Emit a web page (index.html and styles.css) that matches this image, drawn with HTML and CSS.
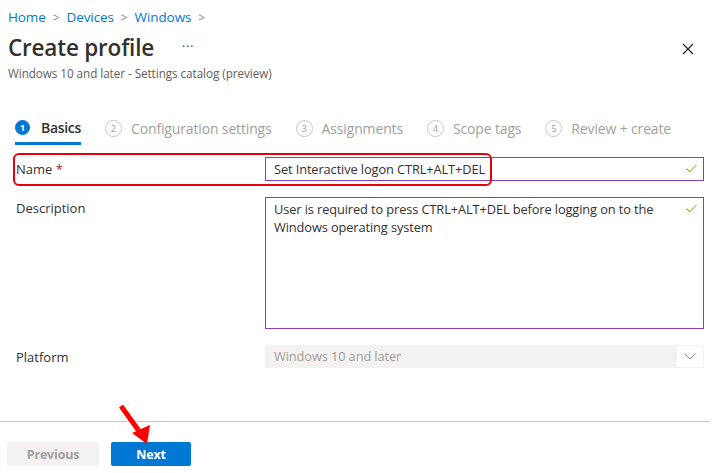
FILE: index.html
```html
<!DOCTYPE html>
<html>
<head>
<meta charset="utf-8">
<link rel="stylesheet" href="styles.css">
</head>
<body>
<div class="page">
  <nav class="crumbs">
    <a>Home</a><span class="sep">&gt;</span><a>Devices</a><span class="sep">&gt;</span><a>Windows</a><span class="sep">&gt;</span>
  </nav>
  <div class="title-row">
    <h1>Create profile</h1>
    <span class="more">···</span>
    <span class="spacer"></span>
    <svg class="close" width="12" height="12" viewBox="0 0 12 12"><path d="M1 1L11 11M11 1L1 11" stroke="#222" stroke-width="1.2" fill="none"/></svg>
  </div>
  <div class="subtitle">Windows 10 and later - Settings catalog (preview)</div>

  <div class="tabs">
    <div class="tab active"><span class="num">1</span><span class="lbl">Basics</span></div>
    <div class="tab"><span class="num">2</span><span class="lbl">Configuration settings</span></div>
    <div class="tab"><span class="num">3</span><span class="lbl">Assignments</span></div>
    <div class="tab"><span class="num">4</span><span class="lbl">Scope tags</span></div>
    <div class="tab"><span class="num">5</span><span class="lbl">Review + create</span></div>
  </div>

  <div class="form">
    <div class="row row-name">
      <div class="label">Name <span class="req">*</span></div>
      <div class="field input">
        <span class="val">Set Interactive logon CTRL+ALT+DEL</span>
        <svg class="check" width="11" height="9" viewBox="0 0 11 9"><path d="M0.5 4.5L3.8 7.8L10.5 1" stroke="#57a300" stroke-width="1" fill="none"/></svg>
      </div>
      <div class="highlight"></div>
    </div>
    <div class="row row-desc">
      <div class="label">Description</div>
      <div class="field textarea">
        <span class="val">User is required to press CTRL+ALT+DEL before logging on to the Windows operating system</span>
        <svg class="check" width="11" height="9" viewBox="0 0 11 9"><path d="M0.5 4.5L3.8 7.8L10.5 1" stroke="#57a300" stroke-width="1" fill="none"/></svg>
      </div>
    </div>
    <div class="row row-plat">
      <div class="label">Platform</div>
      <div class="field select">
        <span class="val">Windows 10 and later</span>
        <span class="chev"><svg width="12" height="7" viewBox="0 0 12 7"><path d="M0.5 0.5L6 6L11.5 0.5" stroke="#8a8886" stroke-width="1" fill="none"/></svg></span>
      </div>
    </div>
  </div>

  <div class="divider"></div>

  <div class="footer">
    <button class="btn prev">Previous</button>
    <button class="btn next">Next</button>
    <svg class="arrow" width="40" height="45" viewBox="0 0 40 45"><path d="M2 2L20 27" stroke="#f00" stroke-width="5" fill="none"/><polygon points="13,29 31,21 28,40" fill="#f00"/></svg>
  </div>
</div>
</body>
</html>
```
FILE: styles.css
```css
* { box-sizing: border-box; }
html, body { margin: 0; padding: 0; background: #fff; }
body {
  font-family: "Open Sans", "Noto Sans", sans-serif;
  font-size: 13px;
  color: #323130;
  width: 715px;
  height: 473px;
  overflow: hidden;
}
.page { position: relative; }

.crumbs {
  padding: 7px 0 0 8px;
  height: 27px;
  line-height: 20px;
  font-size: 13.5px;
  letter-spacing: -0.1px;
}
.crumbs a { color: #0078d4; }
.crumbs .sep { color: #8a8886; margin: 0 7px; font-size: 12px; }

.title-row {
  display: flex;
  align-items: center;
  margin-top: 6px;
  padding: 0 21px 0 8px;
  height: 30px;
}
h1 {
  margin: 0;
  font-size: 22.5px;
  font-weight: 600;
  line-height: 30px;
  color: #323130;
  letter-spacing: -0.2px;
}
.more { margin-left: 28px; font-size: 12px; color: #323130; letter-spacing: 1px; position: relative; top: -2px; }
.spacer { flex: 1; }
.close { display: block; margin-top: 2px; }

.subtitle {
  margin-top: 2px;
  padding-left: 8px;
  height: 16px;
  line-height: 16px;
  font-size: 11.7px;
  color: #605e5c;
  letter-spacing: -0.05px;
}

.tabs {
  display: flex;
  margin-top: 32px;
  padding-left: 15px;
  gap: 24px;
  height: 32px;
}
.tab {
  display: flex;
  align-items: center;
  height: 32px;
  padding-bottom: 2px;
  color: #a19f9d;
  font-size: 14px;
  letter-spacing: -0.15px;
}
.tab .num {
  width: 17px;
  height: 17px;
  border: 1px solid #c8c6c4;
  border-radius: 50%;
  display: flex;
  align-items: center;
  justify-content: center;
  font-size: 9.5px;
  color: #a19f9d;
  margin-right: 9px;
  letter-spacing: 0;
}
.tab.active { border-bottom: 3px solid #0078d4; padding-bottom: 0; color: #323130; font-weight: 600; letter-spacing: -0.3px; }
.tab.active .num {
  width: 15px; height: 15px;
  background: #0078d4;
  border-color: #0078d4;
  color: #fff;
  font-weight: 700;
  margin-right: 11px;
}

.form { margin-top: 12px; padding: 0 11px 0 16px; }
.row { display: flex; position: relative; }
.label {
  width: 249px;
  flex: none;
  line-height: 24px;
  font-size: 13px;
  letter-spacing: 0;
}
.req { color: #a4262c; }
.field {
  flex: 1;
  position: relative;
  font-size: 12.8px;
  letter-spacing: -0.1px;
}
.field .val { display: block; }
.input {
  height: 24px;
  border: 1px solid #8e3db3;
  padding: 0 30px 0 8px;
  line-height: 22px;
}
.check { position: absolute; right: 6px; top: 6px; }
.row-desc { margin-top: 16px; }
.row-desc .label { line-height: 22px; }
.textarea {
  height: 132px;
  border: 1px solid #8e3db3;
  padding: 2px 30px 0 8px;
  line-height: 18px;
}
.row-plat { margin-top: 16px; }
.select {
  height: 23px;
  background: #f3f2f1;
  color: #a19f9d;
  padding: 0 0 0 9px;
  line-height: 23px;
  display: flex;
}
.select .val { flex: 1; }
.chev {
  width: 26px;
  height: 21px;
  margin: 1px 1px 1px 0;
  background: #fff;
  display: flex;
  align-items: center;
  justify-content: center;
}

.highlight {
  position: absolute;
  left: -3px;
  top: -4px;
  width: 479px;
  height: 33px;
  border: 2px solid #e8000b;
  border-radius: 6px;
  pointer-events: none;
}

.divider {
  margin-top: 52px;
  width: 710px;
  height: 1px;
  background: #c8c6c4;
}

.footer {
  position: relative;
  display: flex;
  gap: 12px;
  padding: 20px 0 0 7px;
}
.btn {
  height: 24px;
  border: none;
  border-radius: 2px;
  font-family: "Open Sans", "Noto Sans", sans-serif;
  font-size: 12.5px;
  font-weight: 700;
  padding: 0;
  letter-spacing: -0.2px;
}
.prev { width: 92px; background: #f3f2f1; color: #a19f9d; }
.next { width: 80px; background: #0078d4; color: #fff; }
.arrow { position: absolute; left: 119px; top: -18px; }
```
